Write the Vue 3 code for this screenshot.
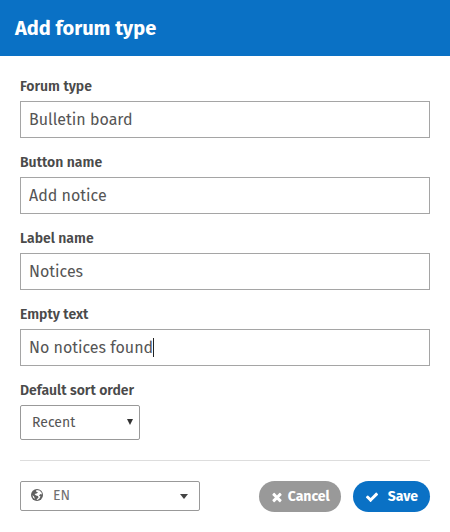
<script setup>
import { ref } from 'vue'

const fields = ref([
  { id: 'forum-type', label: 'Forum type', value: 'Bulletin board' },
  { id: 'button-name', label: 'Button name', value: 'Add notice' },
  { id: 'label-name', label: 'Label name', value: 'Notices' },
  { id: 'empty-text', label: 'Empty text', value: 'No notices found', active: true },
])
const sortOrder = ref('Recent')
const language = ref('EN')
</script>

<template>
  <form class="dialog" @submit.prevent>
    <header class="header">
      <h1>Add forum type</h1>
    </header>
    <div class="body">
      <div v-for="field in fields" :key="field.id" class="field">
        <label :for="field.id">{{ field.label }}</label>
        <div class="control">
          <input :id="field.id" v-model="field.value" type="text" />
          <span v-if="field.active" class="caret"></span>
        </div>
      </div>
      <div class="field">
        <label for="sort-order">Default sort order</label>
        <div class="sort">
          <select id="sort-order" v-model="sortOrder">
            <option>Recent</option>
          </select>
          <svg class="sort-arrow" viewBox="0 0 6 6" aria-hidden="true"><path d="M0 0H6L3 6Z" /></svg>
        </div>
      </div>
      <footer class="footer">
        <div class="language">
          <svg class="globe" viewBox="0 0 24 24" aria-hidden="true">
            <circle cx="12" cy="12" r="12" />
            <path class="sea" d="M11 2 17 3 21 7 22 11 19 10 16 13 19 15 17 19 13 22 11 21 15 17 14 14 10 13 7 10 11 9 14 7 10 5ZM3 12 6 15 8 20 4 17Z" />
          </svg>
          <select v-model="language" aria-label="Language">
            <option>EN</option>
          </select>
          <svg class="language-arrow" viewBox="0 0 8 5" aria-hidden="true"><path d="M0 0H8L4 5Z" /></svg>
        </div>
        <div class="actions">
          <button type="button" class="cancel">
            <svg viewBox="0 0 1792 1792" aria-hidden="true"><path d="M1490 1322q0 40-28 68l-136 136q-28 28-68 28t-68-28l-294-294-294 294q-28 28-68 28t-68-28l-136-136q-28-28-28-68t28-68l294-294-294-294q-28-28-28-68t28-68l136-136q28-28 68-28t68 28l294 294 294-294q28-28 68-28t68 28l136 136q28 28 28 68t-28 68l-294 294 294 294q28 28 28 68z" /></svg>
            Cancel
          </button>
          <button type="submit" class="save">
            <svg viewBox="0 0 1792 1792" aria-hidden="true"><path d="M1671 566q0 40-28 68l-724 724-136 136q-28 28-68 28t-68-28l-136-136-362-362q-28-28-28-68t28-68l136-136q28-28 68-28t68 28l294 295 656-657q28-28 68-28t68 28l136 136q28 28 28 68z" /></svg>
            Save
          </button>
        </div>
      </footer>
    </div>
  </form>
</template>

<style>
body {
  background: #fff;
}
</style>

<style scoped>
.dialog,
.dialog input,
.dialog select,
.dialog button {
  box-sizing: border-box;
  font-family: "Fira Sans", "Noto Sans", sans-serif;
  color: #444;
}
.header {
  padding: 14px 15px;
  background: #0a71c5;
}
h1 {
  margin: 0;
  color: #fff;
  font-size: 20px;
  line-height: 28px;
  font-weight: 700;
}
.body {
  padding: 20px;
}
.field {
  margin-bottom: 14px;
}
label {
  display: block;
  padding-top: 1px;
  margin-bottom: 4px;
  color: #4a4a4a;
  font-size: 14px;
  line-height: 20px;
  font-weight: 600;
}
.control,
.sort,
.language {
  position: relative;
}
.dialog input {
  display: block;
  width: 100%;
  height: 37px;
  padding: 0 8px;
  border: 1px solid #a5a5a5;
  background: #fff;
  color: #555;
  font-size: 16px;
  outline: none;
}
.caret {
  position: absolute;
  left: 133px;
  top: 9px;
  width: 1px;
  height: 19px;
  background: #222;
}
.dialog select {
  display: block;
  width: 100%;
  appearance: none;
  border: 1px solid #999;
  border-radius: 2px;
  background: #fff;
  color: #555;
  font-size: 14px;
}
.sort {
  width: 120px;
}
.sort select {
  height: 35px;
  padding: 0 11px;
}
svg {
  fill: currentColor;
}
.sort-arrow {
  position: absolute;
  right: 7px;
  top: 14px;
  width: 6px;
  height: 6px;
  fill: #333;
}
.footer {
  display: flex;
  justify-content: space-between;
  align-items: flex-start;
  margin-top: 20px;
  padding-top: 20px;
  border-top: 1px solid #ddd;
}
.language {
  width: 180px;
}
.dialog .language select {
  height: 30px;
  padding: 0 32px;
  padding-bottom: 2px;
  color: #707070;
}
.globe {
  position: absolute;
  left: 11px;
  top: 8px;
  width: 12px;
  height: 12px;
  fill: #606060;
}
.sea {
  fill: #fff;
}
.language-arrow {
  position: absolute;
  right: 12px;
  top: 13px;
  width: 8px;
  height: 5px;
}
.actions {
  display: flex;
  gap: 12px;
}
.dialog button {
  display: flex;
  align-items: center;
  justify-content: center;
  height: 31px;
  padding: 0 12px;
  border: 0;
  border-radius: 16px;
  color: #fff;
  font-size: 14px;
  font-weight: 700;
}
button svg {
  width: 14px;
  height: 14px;
}
.dialog .cancel {
  gap: 4px;
  padding: 0 11px;
  background: #999;
}
.save {
  gap: 9px;
  background: #0a71c5;
}
</style>
